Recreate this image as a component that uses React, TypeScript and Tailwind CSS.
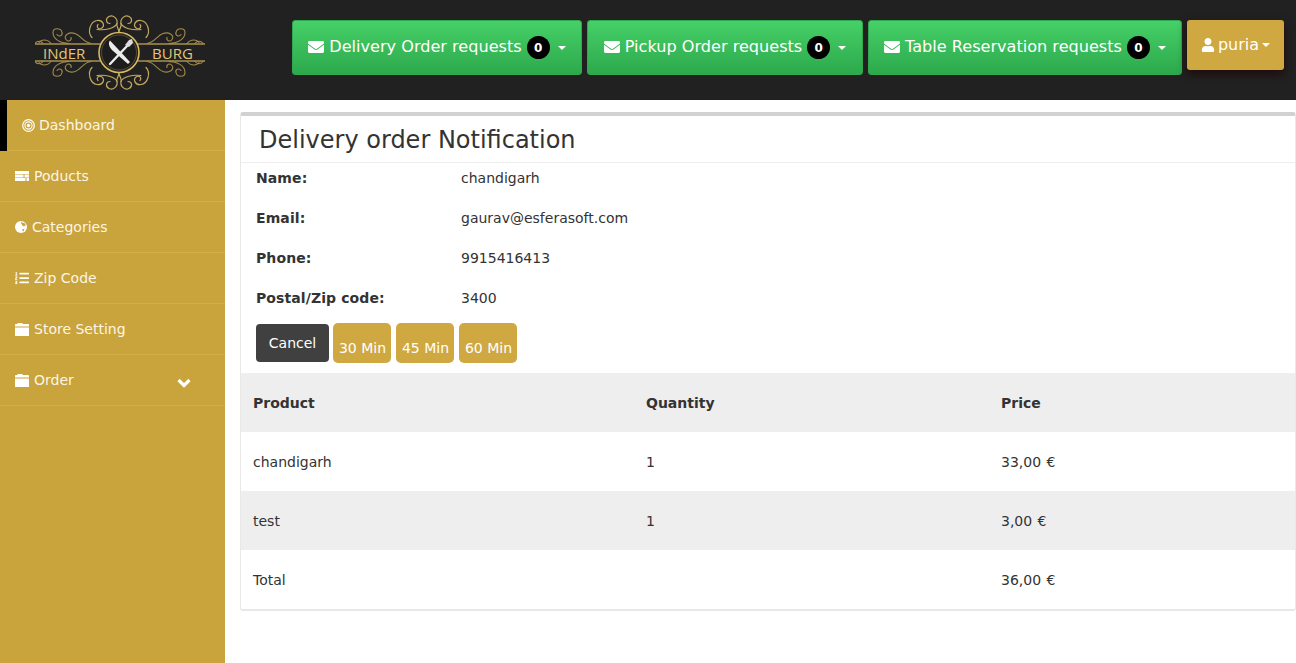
import React from "react";
import { FaEnvelope, FaUser, FaListOl } from "react-icons/fa";

const Caret = () => <span className="inline-block w-0 h-0 border-x-[4px] border-x-transparent border-t-[4px] border-t-white" />;

function Quadrant({ flip }: { flip: string }) {
  return (
    <g transform={flip} fill="none" strokeLinecap="round">
      <g stroke="#a38b4a" strokeWidth="1.1">
        <path d="M-28 -9 C-36 -10 -38 -17 -44 -19 C-50 -21 -56 -17 -53 -13 C-51 -10 -47 -12 -48 -15" />
        <path d="M-50 -9 C-58 -9 -66 -13 -66 -20 C-66 -25 -58 -25 -57 -20 C-56 -17 -60 -15 -62 -18" />
        <path d="M-68 -9 C-72 -14 -78 -13 -80 -10" />
        <path d="M-76 -9 C-78 -12 -82 -12 -84 -9" />
      </g>
      <g stroke="#c4a95f" strokeWidth="1.2">
        <path d="M-27 -15 C-32 -20 -29 -31 -22 -32 C-16 -33 -13 -26 -18 -24 C-21 -23 -23 -26 -21 -28" />
        <path d="M-22 -23 C-14 -22 -4 -24 -2 -29 C-1 -34 -6 -38 -10 -36 C-14 -34 -13 -29 -9 -29" />
        <path d="M0 -21 C-1 -25 -3 -27 -2 -29" />
      </g>
    </g>
  );
}

function Logo() {
  return (
    <svg width="172" height="80" viewBox="0 0 172 80" className="shrink-0">
      <g transform="translate(84 38.5)">
        <Quadrant flip="scale(1 1)" />
        <Quadrant flip="scale(-1 1)" />
        <Quadrant flip="scale(1 -1)" />
        <Quadrant flip="scale(-1 -1)" />
      </g>
      <line x1="0" x2="170" y1="30" y2="30" stroke="#a8924f" strokeWidth="1.4" />
      <line x1="0" x2="170" y1="47" y2="47" stroke="#a8924f" strokeWidth="1.4" />
      <circle cx="84" cy="38.5" r="20" fill="#212121" stroke="#d8b860" strokeWidth="1.6" />
      <circle cx="84" cy="38.5" r="17.5" fill="#1d1d1d" stroke="#7d6a30" strokeWidth="0.6" />
      <path d="M75 26.5 L95 48 L93 50 L77 36 C74 33 73 29 75 26.5 Z" fill="#ececec" />
      <path d="M93 31 L75 50" stroke="#ececec" strokeWidth="2.4" strokeLinecap="round" />
      <path d="M90 31 L94 26 L97 25 L98 29 L94 33 Z" fill="#dcdcdc" />
      <text x="8" y="45" fontFamily="'Open Sans', sans-serif" fontSize="15" fill="#e2c67a">INdER</text>
      <text x="117" y="45" fontFamily="'Open Sans', sans-serif" fontSize="15" fill="#e2c67a">BURG</text>
    </svg>
  );
}

function RequestButton({ label, width }: { label: string; width: string }) {
  return (
    <button className={`${width} h-[55px] shrink-0 flex items-center justify-center gap-[5px] rounded-[3px] border border-[#2fa84e] bg-gradient-to-b from-[#46d068] to-[#2da94c] text-white text-[16.1px]`}>
      <FaEnvelope className="text-[16px] mb-[1px]" />
      <span className="pb-[1px]">{label}</span>
      <span className="w-[23px] h-[23px] rounded-full bg-black text-white text-[12px] font-bold flex items-center justify-center">0</span>
      <span className="ml-[3px] flex items-center"><Caret /></span>
    </button>
  );
}

function ServerIcon() {
  return (
    <svg width="14" height="10" viewBox="0 0 14 10" fill="white" className="shrink-0">
      <path d="M0 0h14v3H0zM0 3.4h8.5v3H0zM9.5 3.4H14v3H9.5zM0 7h10.5v3H0zM11.5 7H14v3h-2.5z" />
    </svg>
  );
}

function FolderIcon() {
  return (
    <svg width="14" height="13" viewBox="0 0 14 13" fill="white" className="shrink-0">
      <path d="M0 4.4h14V13H0zM0 3.6V2C0 1.5.4 1 1 1h1L3 0h4l1 1h5c.6 0 1 .5 1 1v1.6z" />
    </svg>
  );
}

function BullseyeIcon() {
  return (
    <svg width="13" height="13" viewBox="0 0 13 13" fill="none" stroke="white" className="shrink-0">
      <circle cx="6.5" cy="6.5" r="5.8" strokeWidth="1.2" />
      <circle cx="6.5" cy="6.5" r="3.6" strokeWidth="1.1" />
      <circle cx="6.5" cy="6.5" r="1.7" fill="white" strokeWidth="0" />
    </svg>
  );
}

function GlobeIcon() {
  return (
    <svg width="12" height="12" viewBox="0 0 12 12" className="shrink-0">
      <circle cx="6" cy="6" r="6" fill="white" />
      <path d="M6 0.6 L8 2 L9.4 1.8 L10.8 4 L9 5.4 L7.4 4.4 L6.4 2.8 Z" fill="#c9a33b" />
      <path d="M7.6 8 L9.4 8 L8.4 10.4 L7.2 9.8 Z" fill="#c9a33b" />
    </svg>
  );
}

function ChevronIcon() {
  return (
    <svg width="14" height="10" viewBox="0 0 14 10" fill="none" stroke="white" strokeWidth="3.2" className="ml-auto mr-[34px] mt-[5px] shrink-0">
      <path d="M1.5 2 L7 7.5 L12.5 2" />
    </svg>
  );
}

function NavItem({ icon, label, active, chevron }: { icon: React.ReactNode; label: string; active?: boolean; chevron?: boolean }) {
  return (
    <div className={active ? "border-l-[7px] border-black" : ""}>
      <div className={`h-[51px] flex items-center border-b border-[#d2ad48] text-[14px] text-[#fbf6e6] pl-[15px] ${active ? "gap-[4px]" : "gap-[5px]"}`}>
        {icon}
        <span>{label}</span>
        {chevron && <ChevronIcon />}
      </div>
    </div>
  );
}

function InfoRow({ label, value }: { label: string; value: string }) {
  return (
    <div className="h-[40px] pt-[5px] flex text-[14px] leading-[20px] text-[#333333]">
      <div className="w-[205px] font-bold tracking-[0.1px]">{label}</div>
      <div>{value}</div>
    </div>
  );
}

function TimeButton({ label }: { label: string }) {
  return (
    <button className="w-[58px] h-[40px] rounded-[5px] bg-[#cfa841] text-white text-[14px] pt-[10px] pl-[1px]">{label}</button>
  );
}

const rowCols = "grid grid-cols-[393px_355px_1fr] items-center h-[59px] px-[12px] pt-[2px] text-[14px]";

export default function App() {
  return (
    <div className="w-[1296px] h-[663px] overflow-hidden bg-white flex flex-col font-['DejaVu_Sans',sans-serif] text-[#333333]">
      <header className="h-[100px] shrink-0 bg-[#212121] flex items-start">
        <div className="w-[292px] shrink-0 h-[100px] pl-[35px] pt-[14px]"><Logo /></div>
        <div className="flex items-start gap-[5px] pt-[20px]">
          <RequestButton label="Delivery Order requests" width="w-[290px]" />
          <RequestButton label="Pickup Order requests" width="w-[276px]" />
          <RequestButton label="Table Reservation requests" width="w-[314px]" />
          <button className="w-[97px] h-[50px] rounded-[3px] bg-[#cfa841] text-white text-[16px] flex items-center justify-center gap-[3px] shadow-[0_4px_10px_rgba(30,0,0,0.7)]">
            <FaUser className="text-[14px]" />
            <span>puria</span>
            <Caret />
          </button>
        </div>
      </header>
      <div className="flex flex-1 min-h-0">
        <aside className="w-[225px] shrink-0 bg-[#c9a33b]">
          <NavItem active icon={<BullseyeIcon />} label="Dashboard" />
          <NavItem icon={<ServerIcon />} label="Poducts" />
          <NavItem icon={<GlobeIcon />} label="Categories" />
          <NavItem icon={<FaListOl className="text-[14px] text-white" />} label="Zip Code" />
          <NavItem icon={<FolderIcon />} label="Store Setting" />
          <NavItem icon={<FolderIcon />} label="Order" chevron />
        </aside>
        <main className="flex-1 min-w-0 pl-[15px] pt-[12px]">
          <section className="h-[499px] border-x border-b-2 border-[#e8e8e8] border-t-[4px] border-t-[#d2d2d2] rounded-[3px]">
            <div className="h-[47px] border-b border-[#eeeeee] pl-[18px] pt-[1px] flex items-center">
              <h1 className="text-[24px] leading-[30px] text-[#333333]">Delivery order Notification</h1>
            </div>
            <div className="pl-[15px]">
              <InfoRow label="Name:" value="chandigarh" />
              <InfoRow label="Email:" value="gaurav@esferasoft.com" />
              <InfoRow label="Phone:" value="9915416413" />
              <InfoRow label="Postal/Zip code:" value="3400" />
              <div className="flex items-start gap-[5px] h-[50px]">
                <button className="w-[73px] h-[38px] mt-px rounded-[4px] bg-[#404040] text-white text-[14px] mr-[-1px]">Cancel</button>
                <TimeButton label="30 Min" />
                <TimeButton label="45 Min" />
                <TimeButton label="60 Min" />
              </div>
            </div>
            <div>
              <div className={`${rowCols} bg-[#eeeeee] font-bold`}><span>Product</span><span>Quantity</span><span>Price</span></div>
              <div className={rowCols}><span>chandigarh</span><span>1</span><span className="[word-spacing:1px]">33,00 €</span></div>
              <div className={`${rowCols} bg-[#eeeeee]`}><span>test</span><span>1</span><span className="[word-spacing:1px]">3,00 €</span></div>
              <div className={rowCols}><span>Total</span><span></span><span className="[word-spacing:1px]">36,00 €</span></div>
            </div>
          </section>
        </main>
      </div>
    </div>
  );
}
